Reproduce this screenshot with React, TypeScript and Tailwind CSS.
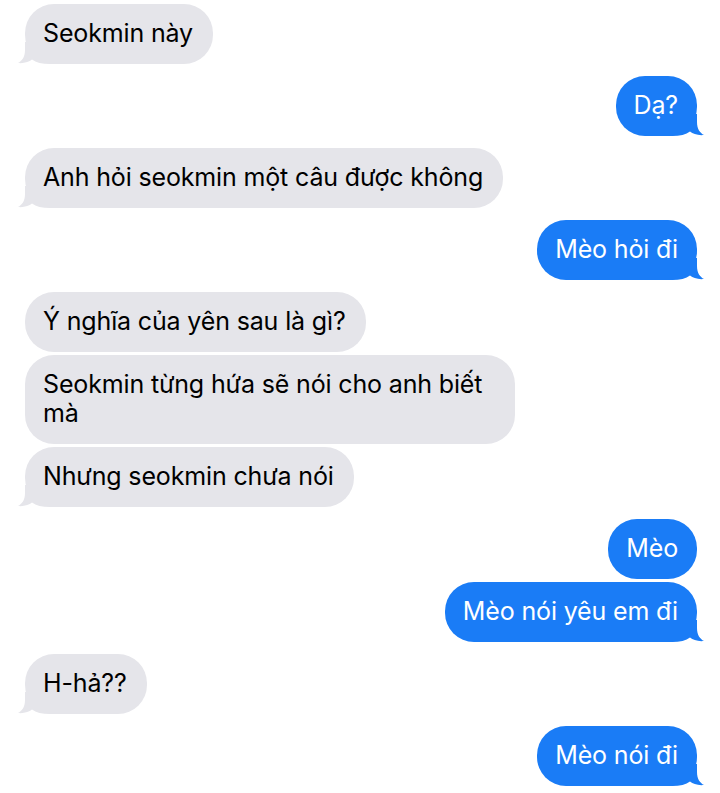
import clsx from 'clsx'

interface Message {
  text: string
  me: boolean
  tail: boolean
}

type Group = Message[]

const groups: Group[] = [
  [{ text: 'Seokmin này', me: false, tail: true }],
  [{ text: 'Dạ?', me: true, tail: true }],
  [{ text: 'Anh hỏi seokmin một câu được không', me: false, tail: true }],
  [{ text: 'Mèo hỏi đi', me: true, tail: true }],
  [
    { text: 'Ý nghĩa của yên sau là gì?', me: false, tail: false },
    { text: 'Seokmin từng hứa sẽ nói cho anh biết mà', me: false, tail: false },
    { text: 'Nhưng seokmin chưa nói', me: false, tail: true },
  ],
  [
    { text: 'Mèo', me: true, tail: false },
    { text: 'Mèo nói yêu em đi', me: true, tail: true },
  ],
  [{ text: 'H-hả??', me: false, tail: true }],
  [{ text: 'Mèo nói đi', me: true, tail: true }],
]

// ── Bubble tail, drawn for the left side and mirrored for the right ──

function Tail({ me }: { me: boolean }) {
  return (
    <svg
      width="40"
      height="22"
      viewBox="0 0 40 22"
      className={clsx('absolute bottom-0', me ? 'right-[-7px] -scale-x-100' : 'left-[-7px]')}
    >
      <path
        d="M7 0 L7 8 C7 15 4 19 0 21 C6 21.6 11 20 14 17.5 C18 20.5 24 22 32 22 L40 22 L40 0 Z"
        fill={me ? '#1a7cf6' : '#e5e5ea'}
      />
    </svg>
  )
}

function Bubble({ text, me, tail }: Message) {
  return (
    <div
      className={clsx(
        'relative max-w-[490px] rounded-[29px] pt-[15px] pb-[16px] text-[25px] leading-[29px] tracking-[-0.15px]',
        me
          ? 'self-end bg-[#1a7cf6] text-white pl-[18px] pr-[19px]'
          : 'self-start bg-[#e5e5ea] text-black pl-[18px] pr-[20px]',
      )}
    >
      <span className="relative z-10">{text}</span>
      {tail && <Tail me={me} />}
    </div>
  )
}

export default function App() {
  return (
    <div
      className="min-h-[793px] w-[720px] bg-white pt-[4px] pl-[25px] pr-[23px] flex flex-col gap-[12px]"
      style={{ fontFamily: 'Inter, "Noto Sans", sans-serif' }}
    >
      {groups.map((group, gi) => (
        <div key={gi} className="flex flex-col gap-[3px]">
          {group.map((m, mi) => (
            <Bubble key={mi} {...m} />
          ))}
        </div>
      ))}
    </div>
  )
}
